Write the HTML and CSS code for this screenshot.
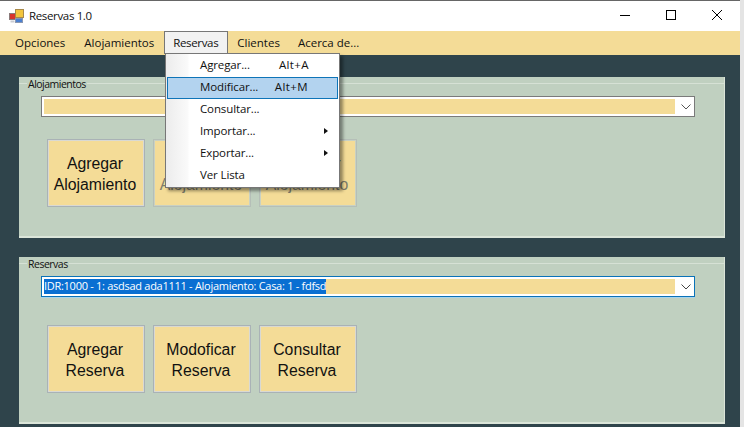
FILE: index.html
```html
<!DOCTYPE html>
<html lang="es">
<head>
    <meta charset="UTF-8">
    <title>Reservas 1.0</title>
    <link rel="stylesheet" href="styles.css">
</head>
<body>
    <div class="window">
        <div class="titlebar">
            <svg class="app-icon" width="15" height="15" viewBox="0 0 15 15">
                <rect x="0.5" y="4.5" width="6" height="6" fill="#d8342c" stroke="#8a7a7a"/>
                <rect x="6.5" y="0.5" width="8" height="8" fill="#f2c53d" stroke="#a8894a"/>
                <rect x="6.5" y="9.5" width="7" height="4" fill="#4a7fd0" stroke="#8a97b0"/>
                <rect x="1.5" y="11.5" width="4" height="2" fill="#c9ccd2"/>
            </svg>
            <span class="title">Reservas 1.0</span>
            <div class="controls">
                <svg class="ctl" width="46" height="30" viewBox="0 0 46 30"><path d="M18 14.5h10" stroke="#000" fill="none"/></svg>
                <svg class="ctl" width="46" height="30" viewBox="0 0 46 30"><rect x="18.5" y="9.5" width="9" height="9" stroke="#000" fill="none"/></svg>
                <svg class="ctl" width="46" height="30" viewBox="0 0 46 30"><path d="M18 9l10 10M28 9l-10 10" stroke="#000" fill="none"/></svg>
            </div>
        </div>
        <div class="menubar">
            <span class="menu-item">Opciones</span>
            <span class="menu-item">Alojamientos</span>
            <span class="menu-item open">Reservas</span>
            <span class="menu-item">Clientes</span>
            <span class="menu-item">Acerca de...</span>
        </div>
        <div class="content">
            <section class="group group-top">
                <span class="group-label">Alojamientos</span>
                <div class="combo">
                    <div class="combo-field"></div>
                    <svg class="chevron" width="12" height="8" viewBox="0 0 12 8"><path d="M1.5 1.5l4.5 4.5 4.5-4.5" stroke="#555" fill="none"/></svg>
                </div>
                <div class="buttons">
                    <button class="big-btn">Agregar<br>Alojamiento</button>
                    <button class="big-btn off">Modificar<br>Alojamiento</button>
                    <button class="big-btn off">Consultar<br>Alojamiento</button>
                </div>
            </section>
            <section class="group group-bottom">
                <span class="group-label">Reservas</span>
                <div class="combo focus">
                    <div class="combo-field"><span class="selected">IDR:1000 - 1: asdsad ada1111 - Alojamiento: Casa: 1 - fdfsd</span></div>
                    <svg class="chevron" width="12" height="8" viewBox="0 0 12 8"><path d="M1.5 1.5l4.5 4.5 4.5-4.5" stroke="#444" fill="none"/></svg>
                </div>
                <div class="buttons">
                    <button class="big-btn">Agregar<br>Reserva</button>
                    <button class="big-btn">Modoficar<br>Reserva</button>
                    <button class="big-btn">Consultar<br>Reserva</button>
                </div>
            </section>
        </div>

        <div class="dropdown">
            <div class="drop-row"><span class="drop-name">Agregar...</span><span class="drop-key">Alt+A</span></div>
            <div class="drop-row hover"><span class="drop-name">Modificar...</span><span class="drop-key">Alt+M</span></div>
            <div class="drop-row"><span class="drop-name">Consultar...</span></div>
            <div class="drop-row"><span class="drop-name">Importar...</span><span class="arrow"></span></div>
            <div class="drop-row"><span class="drop-name">Exportar...</span><span class="arrow"></span></div>
            <div class="drop-row"><span class="drop-name">Ver Lista</span></div>
        </div>
    </div>
</body>
</html>
```

FILE: styles.css
```css
html, body {
    margin: 0;
    padding: 0;
    height: 427px;
    overflow: hidden;
    background-color: #e4e4e4;
}
.window {
    position: relative;
    width: 740px;
    height: 427px;
    border-top: 1px solid #666;
    box-sizing: border-box;
    display: flex;
    flex-direction: column;
    font-family: "Open Sans", "Noto Sans", sans-serif;
    font-size: 11.5px;
    color: #111;
}
.titlebar {
    height: 30px;
    background-color: #fff;
    display: flex;
    align-items: center;
    padding-left: 9px;
}
.app-icon {
    margin-right: 5px;
}
.title {
    font-size: 11.5px;
    letter-spacing: -0.35px;
    line-height: 14px;
    flex: 1;
}
.controls {
    display: flex;
}
.ctl {
    display: block;
}
.menubar {
    height: 24px;
    background-color: #f4dc97;
    display: flex;
    align-items: center;
    padding-left: 7px;
}
.menu-item {
    padding: 0 8px;
    height: 24px;
    line-height: 24px;
    box-sizing: border-box;
    margin-right: 3px;
}
.menu-item:nth-child(4) {
    margin-right: 2px;
}
.menu-item.open {
    background-color: #f2f2f2;
    border: 1px solid #777;
    border-bottom: none;
    height: 23px;
    line-height: 21px;
    margin: -1px 1px 0 -1px;
    padding: 0 9px 0 8px;
    letter-spacing: -0.35px;
}
.content {
    flex: 1;
    background-color: #2f444b;
    padding: 22px 15px 3px 19px;
    display: flex;
    flex-direction: column;
    gap: 19px;
}
.group {
    position: relative;
    background-color: #c0d0c0;
    box-sizing: border-box;
    border-bottom: 2px solid #dbe5d9;
    border-right: 1px solid #dbe5d9;
    padding-left: 22px;
}
.group::before {
    content: "";
    position: absolute;
    left: 0;
    right: 0;
    top: 6px;
    border-top: 1px solid #d6e1d5;
}
.group-top {
    height: 161px;
}
.group-bottom {
    height: 167px;
}
.group-label {
    position: absolute;
    left: 8px;
    top: 0;
    padding: 0 1px;
    background-color: #c0d0c0;
    font-size: 10.5px;
    letter-spacing: -0.5px;
    line-height: 14px;
    color: #111;
    z-index: 1;
}
.combo {
    margin-top: 19px;
    width: 654px;
    height: 21px;
    box-sizing: border-box;
    background-color: #fff;
    border: 1px solid #7a7a7a;
    display: flex;
    align-items: center;
    padding: 2px 0 2px 2px;
}
.combo.focus {
    border-color: #0a72b8;
    box-shadow: 0 1px 0 #a7d4ec;
}
.combo-field {
    width: 631px;
    height: 15px;
    background-color: #f4dc97;
    line-height: 14px;
    overflow: hidden;
    font-size: 11px;
}
.selected {
    display: inline-block;
    background-color: #0a6fd2;
    color: #fff;
    letter-spacing: -0.28px;
    height: 15px;
}
.chevron {
    margin-left: 5px;
}
.buttons {
    display: flex;
    gap: 8px;
    margin: 22px 0 0 6px;
}
.group-bottom .buttons {
    margin-top: 28px;
}
.big-btn {
    width: 98px;
    height: 68px;
    box-sizing: border-box;
    background-color: #f4dc97;
    border: 2px solid #d9d9d3;
    outline: 1px solid #a9b2b6;
    outline-offset: -1px;
    font-family: "Liberation Sans", Arial, sans-serif;
    font-size: 15.8px;
    line-height: 21px;
    color: #111;
    padding: 2px 2px 0 0;
}
.big-btn.off {
    outline-color: #b5bfb8;
    border-color: #c9d1c3;
    color: #7d7c6c;
}
.dropdown {
    position: absolute;
    left: 165px;
    top: 52px;
    width: 175px;
    height: 135px;
    box-sizing: border-box;
    border: 1px solid #777;
    background: linear-gradient(to right, #ececec 0, #fafafa 22px, #fff 23px);
    box-shadow: 3px 3px 3px rgba(0, 0, 0, 0.4);
    padding: 1px;
    z-index: 2;
}
.drop-row {
    position: relative;
    height: 22px;
    line-height: 19px;
    box-sizing: border-box;
    padding-left: 33px;
    letter-spacing: -0.12px;
    display: flex;
}
.drop-row.hover {
    background-color: #b3d3ef;
    border: 1px solid #0e74b8;
    padding-left: 32px;
    line-height: 17px;
}
.drop-name {
    flex: 1;
}
.drop-key {
    flex: none;
    margin-right: 29px;
    letter-spacing: 0.4px;
}
.arrow {
    position: absolute;
    left: 157px;
    top: 7px;
    border-left: 4px solid #111;
    border-top: 3.5px solid transparent;
    border-bottom: 3.5px solid transparent;
}
```
